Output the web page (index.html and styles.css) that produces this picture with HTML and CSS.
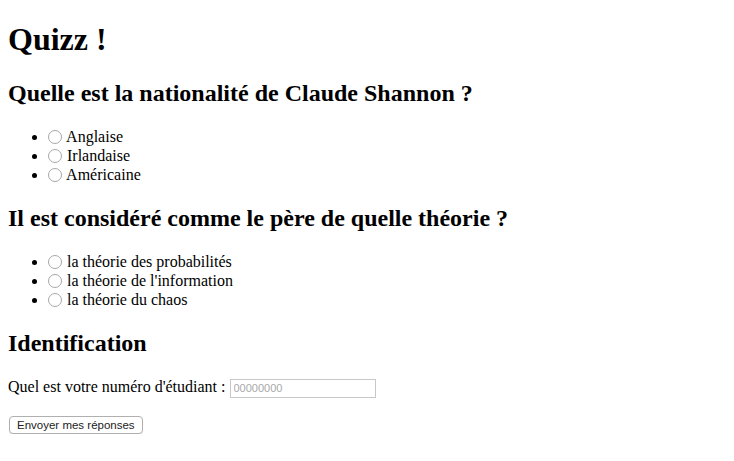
FILE: index.html
```html
<!DOCTYPE html>
<html lang="fr">
<head>
<meta charset="utf-8">
<title>Quizz</title>
<link rel="stylesheet" href="styles.css">
</head>
<body class="page">
<h1 class="title">Quizz !</h1>
<form class="quiz">
  <h2 class="question">Quelle est la nationalité de Claude Shannon ?</h2>
  <ul class="choices">
    <li class="choice"><label><input class="radio" type="radio" name="q1" value="a"> Anglaise</label></li>
    <li class="choice"><label><input class="radio" type="radio" name="q1" value="b"> Irlandaise</label></li>
    <li class="choice"><label><input class="radio" type="radio" name="q1" value="c"> Américaine</label></li>
  </ul>
  <h2 class="question">Il est considéré comme le père de quelle théorie ?</h2>
  <ul class="choices">
    <li class="choice"><label><input class="radio" type="radio" name="q2" value="a"> la théorie des probabilités</label></li>
    <li class="choice"><label><input class="radio" type="radio" name="q2" value="b"> la théorie de l'information</label></li>
    <li class="choice"><label><input class="radio" type="radio" name="q2" value="c"> la théorie du chaos</label></li>
  </ul>
  <h2 class="question">Identification</h2>
  <p class="ident"><label>Quel est votre numéro d'étudiant : <input class="field" type="text" placeholder="00000000"></label></p>
  <button class="submit" type="submit">Envoyer mes réponses</button>
</form>
</body>
</html>
```

FILE: styles.css
```css
.page {
  margin: 8px;
  font-family: "Liberation Serif", "Times New Roman", serif;
  font-size: 16px;
  line-height: 19px;
  color: #000;
  background: #fff;
}
.title {
  font-size: 32px;
  line-height: 37px;
  margin: 13px 0 21px;
}
.question {
  font-size: 24px;
  line-height: 28px;
  margin: 20px 0;
}
.choices {
  margin: 16px 0;
  padding-left: 40px;
}
.radio {
  appearance: none;
  -webkit-appearance: none;
  width: 14px;
  height: 14px;
  border: 1px solid #a8a8a8;
  border-radius: 50%;
  margin: 0 1px 0 0;
  vertical-align: -2px;
  background: #fff;
  box-sizing: border-box;
}
.ident {
  margin: 16px 0;
}
.field {
  width: 146px;
  height: 19px;
  box-sizing: border-box;
  border: 1px solid #c8c8c8;
  padding: 1px 3px;
  font-family: "Liberation Sans", Arial, sans-serif;
  font-size: 11px;
  margin: 0;
  vertical-align: 0;
}
.field::placeholder {
  color: #a9a9a9;
}
.submit {
  font-family: "Liberation Sans", Arial, sans-serif;
  font-size: 11.5px;
  color: #222;
  background: #fff;
  border: 1px solid #b0b0b0;
  border-radius: 4px;
  height: 18px;
  padding: 0 7px;
  margin: 1px 0 0 1px;
  box-shadow: 0 1px 1px rgba(0,0,0,0.08);
}
```
